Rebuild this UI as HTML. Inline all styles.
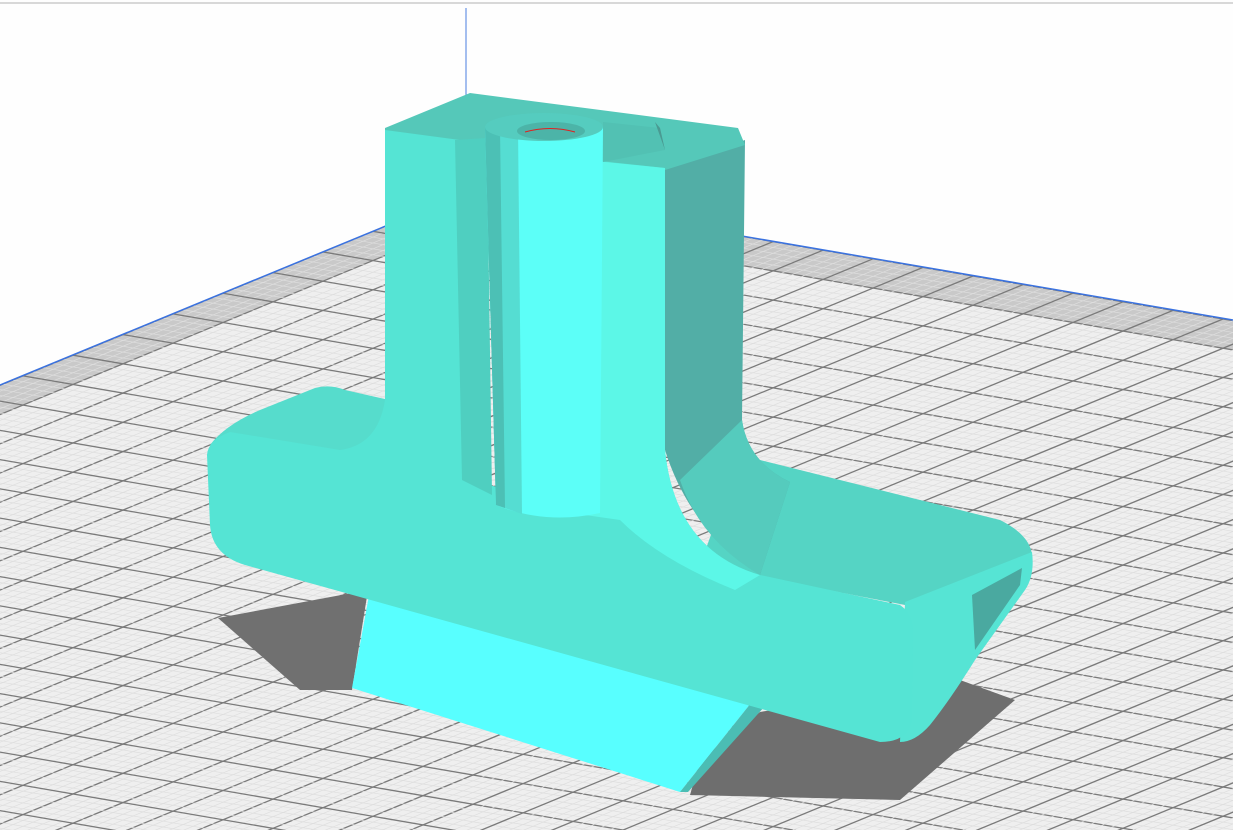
<!DOCTYPE html>
<html><head><meta charset="utf-8"><style>html,body{margin:0;padding:0;background:#fff;overflow:hidden;width:1233px;height:830px}svg{display:block;position:absolute;left:0;top:0}</style></head>
<body>
<svg id="s" width="1233" height="830" viewBox="0 0 1233 830" xmlns="http://www.w3.org/2000/svg">
<defs><clipPath id="pl"><polygon points="0,385 473,190 1233,320 1233,830 0,830"/></clipPath></defs>
<rect width="1233" height="830" fill="#fefefe"/>
<line x1="0" y1="3" x2="1233" y2="3" stroke="#d8d8d8" stroke-width="2"/>
<line x1="466" y1="8" x2="466" y2="95" stroke="#4a7fe0" stroke-width="1"/>
<polygon points="0,385 473,190 1233,320 1233,830 0,830" fill="#efefef"/>
<g id="grid" clip-path="url(#pl)"></g>
<polyline points="0,385 473,190 1233,320" fill="none" stroke="#3a72e0" stroke-width="1.5"/>
<!-- shadows -->
<polygon points="218,618 368,590 352,690 300,690" fill="#707070"/>
<polygon points="700,760 760,712 960,680 1015,700 900,800 690,795" fill="#6e6e6e"/>
<!-- base trapezoid -->
<polygon points="370,590 755,698 680,792 352,688" fill="#58ffff"/>
<polygon points="755,698 765,706 688,792 680,792" fill="#4bbdb4"/>
<!-- bar top left -->
<path d="M210,445 Q225,425 260,410 L315,388 Q330,384 345,390 L398,402 L395,470 L215,450 Z" fill="#56dccc"/>
<!-- bar top right -->
<path d="M740,455 L1000,520 Q1030,535 1032,555 L905,605 L700,565 Z" fill="#55d4c4"/>
<!-- end cap -->
<path d="M905,602 L1032,552 Q1035,575 1025,590 L975,660 Q950,700 930,725 Q915,742 900,742 Z" fill="#56e4d4"/>
<path d="M972,595 L1022,568 L1020,585 L975,650 Z" fill="#4aa9a0"/>
<!-- tower right side face -->
<path d="M665,168 L745,140 L742,420 Q748,462 790,482 L760,575 Q690,530 665,450 Z" fill="#52aea6"/>
<path d="M742,420 Q748,462 790,482 L760,575 Q700,540 680,480 Z" fill="#55cbbd"/>
<!-- tower top -->
<polygon points="385,128 470,93 738,128 745,145 665,170 585,160 385,135" fill="#55c8b9"/>
<!-- bar front face with tower -->
<path d="M207,455 Q208,440 230,432 L340,450 Q378,445 385,400 L385,130 L460,140 L470,480 L585,510 L590,160 L665,168 L665,450 Q675,550 760,575 L900,605 Q915,615 913,640 L912,720 Q908,742 880,742 L245,565 Q212,555 210,525 Z" fill="#55e4d4"/>
<path d="M585,160 L665,168 L665,450 Q675,550 760,575 L735,590 Q660,560 620,520 L585,515 Z" fill="#5cf7e7"/>
<path d="M455,140 L487,138 L492,495 L462,480 Z" fill="#4fcfc0"/>
<!-- cylinder -->
<path d="M485,127 L603,127 L600,513 Q545,525 496,505 Z" fill="#5cfff8"/>
<path d="M485,127 L518,128 L522,514 L496,505 Z" fill="#55ddd2"/>
<path d="M485,127 L500,128 L505,508 L496,505 Z" fill="#4cc0b5"/>
<ellipse cx="544" cy="127" rx="59" ry="14" fill="#55ccbf"/>
<ellipse cx="551" cy="131" rx="34" ry="9" fill="#4cb4a8"/>
<path d="M525,132 Q550,125 575,132" stroke="#e02020" stroke-width="1" fill="none"/>
<path d="M603,122 L660,128 L665,150 L603,162 Z" fill="#52c1b3"/>
<path d="M655,122 L665,150 L660,128 Z" fill="#4a9a92"/>
</svg>
<script>
(function(){
var g=document.getElementById('grid'),NS='http://www.w3.org/2000/svg';
var C=[473,190],a=[1,0.172],b=[-1,0.413],d=50,F=3000;
function L(x1,y1,x2,y2,c,w){var l=document.createElementNS(NS,'line');l.setAttribute('x1',x1);l.setAttribute('y1',y1);l.setAttribute('x2',x2);l.setAttribute('y2',y2);l.setAttribute('stroke',c);l.setAttribute('stroke-width',w);g.appendChild(l);}
function P(pts,c){var p=document.createElementNS(NS,'polygon');p.setAttribute('points',pts.map(function(q){return q.join(',')}).join(' '));p.setAttribute('fill',c);g.appendChild(p);}
P([C,[C[0]+F*b[0],C[1]+F*b[1]],[C[0]+d*a[0]+F*b[0],C[1]+d*a[1]+F*b[1]],[C[0]+d*a[0],C[1]+d*a[1]]],'#c9c9c9');
P([C,[C[0]+F*a[0],C[1]+F*a[1]],[C[0]+d*b[0]+F*a[0],C[1]+d*b[1]+F*a[1]],[C[0]+d*b[0],C[1]+d*b[1]]],'#c9c9c9');
for(var k=0;k<200;k++){var s=k*d/5,c=(k%5==0)?'#7a7a7a':'#dedede',w=(k%5==0)?1.3:0.7;
var p=[C[0]+s*a[0],C[1]+s*a[1]];L(p[0],p[1],p[0]+F*b[0],p[1]+F*b[1],c,w);
var q=[C[0]+s*b[0],C[1]+s*b[1]];L(q[0],q[1],q[0]+F*a[0],q[1]+F*a[1],c,w);}
})();
</script>
</body></html>
